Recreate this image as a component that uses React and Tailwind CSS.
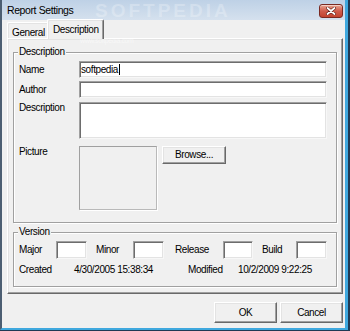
export default function App() {
  const font = "font-['Liberation_Sans',Arial,sans-serif] text-[10px] tracking-[-0.4px] leading-[12px] text-black";
  const sunken =
    "bg-white border border-t-[#a0a0a0] border-l-[#a0a0a0] border-r-[#f7f7f7] border-b-[#f7f7f7] shadow-[inset_1px_1px_0_#6d6d6d,inset_-1px_-1px_0_#e3e3e3]";
  const button =
    "bg-[#f0f0f0] border border-t-white border-l-white border-r-[#696969] border-b-[#696969] shadow-[inset_-1px_-1px_0_#a0a0a0,inset_1px_1px_0_#e3e3e3] flex items-center justify-center";
  const group =
    "border border-[#a0a0a0] shadow-[1px_1px_0_#ffffff,inset_1px_1px_0_#ffffff] pl-[5px] pr-[9px] min-w-0";
  const legend = "-ml-px px-px bg-[#f0f0f0] leading-[12px]";

  return (
    <div className="w-[350px] h-[331px] bg-[#1f3a55] pr-[2px] pb-px flex">
      <div
        className={`relative flex-1 flex flex-col bg-[#f0f0f0] border-l-2 border-l-[#4c5e72] border-r-[3px] border-r-[#3fa8de] border-b-2 border-b-[#3fa8de] overflow-hidden ${font}`}
      >
        {/* Title bar */}
        <div className="h-[20px] shrink-0 flex items-center pl-[5px] pr-[2px] bg-gradient-to-b from-[#bed1e6] to-[#d5e1ee]">
          <span className="text-[10.5px] text-black">Report Settings</span>
          <div className="ml-auto mt-[1px] w-[24px] h-[14px] rounded-[3px] border border-[#7a2a22] bg-gradient-to-b from-[#e7a493] via-[#cf5c4c] to-[#c3432f] flex items-center justify-center shadow-[inset_0_1px_0_rgba(255,255,255,0.5)]">
            <svg width="10" height="8" viewBox="0 0 10 8">
              <path d="M1.5 1 L8.5 7 M8.5 1 L1.5 7" stroke="#5a1a14" strokeWidth="3" strokeLinecap="round" />
              <path d="M1.5 1 L8.5 7 M8.5 1 L1.5 7" stroke="#ffffff" strokeWidth="1.8" strokeLinecap="round" />
            </svg>
          </div>
        </div>

        {/* watermark */}
        <div className="absolute left-[93px] top-[1px] text-[19px] tracking-[3px] font-bold text-white/25 leading-[19px] pointer-events-none">
          SOFTPEDIA
        </div>
        <div className="absolute left-[78px] top-[36px] text-[7px] text-white/50 leading-[9px] pointer-events-none">
          www.softpedia.com
        </div>

        {/* Body */}
        <div className="flex-1 flex flex-col pl-[5px] pr-[2px]">
          {/* Tabs */}
          <div className="h-[18px] shrink-0 flex items-end">
            <div className="h-[16px] w-[40px] border-l border-t border-l-white border-t-white rounded-tl-[2px] shadow-[inset_1px_1px_0_#e3e3e3] pl-[4px] pt-[4px]">
              General
            </div>
            <div className="relative z-10 -mb-px h-[20px] w-[57px] bg-[#f0f0f0] border-l border-t border-r border-l-white border-t-white border-r-[#696969] rounded-t-[2px] shadow-[inset_-1px_0_0_#a0a0a0,inset_1px_1px_0_#e3e3e3] pl-[5px] pt-[4px]">
              Description
            </div>
          </div>

          {/* Tab panel */}
          <div className="h-[256px] shrink-0 border border-t-white border-l-white border-r-[#696969] border-b-[#696969] shadow-[inset_-1px_-1px_0_#a0a0a0,inset_1px_1px_0_#e3e3e3] pt-[7px] pl-[5px] pr-[5px] flex flex-col">
            {/* Description group */}
            <fieldset className={`${group} h-[177px] flex flex-col`}>
              <legend className={legend}>Description</legend>
              <div className="mt-[3px] flex items-center h-[17px]">
                <span className="w-[60px] shrink-0">Name</span>
                <div className={`${sunken} flex-1 h-full flex items-center pl-[1px]`}>
                  <span>softpedia</span>
                  <span className="w-px h-[11px] bg-black ml-px" />
                </div>
              </div>
              <div className="mt-[3px] flex items-center h-[17px]">
                <span className="w-[60px] shrink-0">Author</span>
                <div className={`${sunken} flex-1 h-full`} />
              </div>
              <div className="mt-[4px] flex h-[37px]">
                <span className="w-[60px] shrink-0">Description</span>
                <div className={`${sunken} flex-1 h-full`} />
              </div>
              <div className="mt-[7px] flex h-[64px]">
                <span className="w-[60px] shrink-0">Picture</span>
                <div className="w-[78px] h-full border border-t-[#a0a0a0] border-l-[#a0a0a0] border-r-[#b9b9b9] border-b-[#b9b9b9] shadow-[1px_1px_0_#fff]" />
                <div className={`${button} ml-[5px] w-[64px] h-[18px]`}>Browse...</div>
              </div>
            </fieldset>

            {/* Version group */}
            <fieldset className={`${group} mt-[3px] h-[61px] flex flex-col`}>
              <legend className={legend}>Version</legend>
              <div className="mt-[3px] flex items-center h-[18px]">
                <span className="w-[37px] shrink-0">Major</span>
                <div className={`${sunken} w-[31px] h-full`} />
                <span className="ml-[9px] w-[37px] shrink-0">Minor</span>
                <div className={`${sunken} w-[31px] h-full`} />
                <span className="ml-[11px] w-[48px] shrink-0">Release</span>
                <div className={`${sunken} w-[30px] h-full`} />
                <span className="ml-[9px] w-[34px] shrink-0">Build</span>
                <div className={`${sunken} w-[31px] h-full`} />
              </div>
              <div className="mt-[5px] flex items-center h-[12px]">
                <span className="w-[55px] shrink-0">Created</span>
                <span className="w-[114px] shrink-0">4/30/2005 15:38:34</span>
                <span className="w-[50px] shrink-0">Modified</span>
                <span>10/2/2009 9:22:25</span>
              </div>
            </fieldset>
          </div>

          {/* Buttons */}
          <div className="mt-[8px] flex justify-end gap-[3px]">
            <div className={`${button} w-[63px] h-[21px]`}>OK</div>
            <div className={`${button} w-[63px] h-[21px]`}>Cancel</div>
          </div>
        </div>
      </div>
    </div>
  );
}
